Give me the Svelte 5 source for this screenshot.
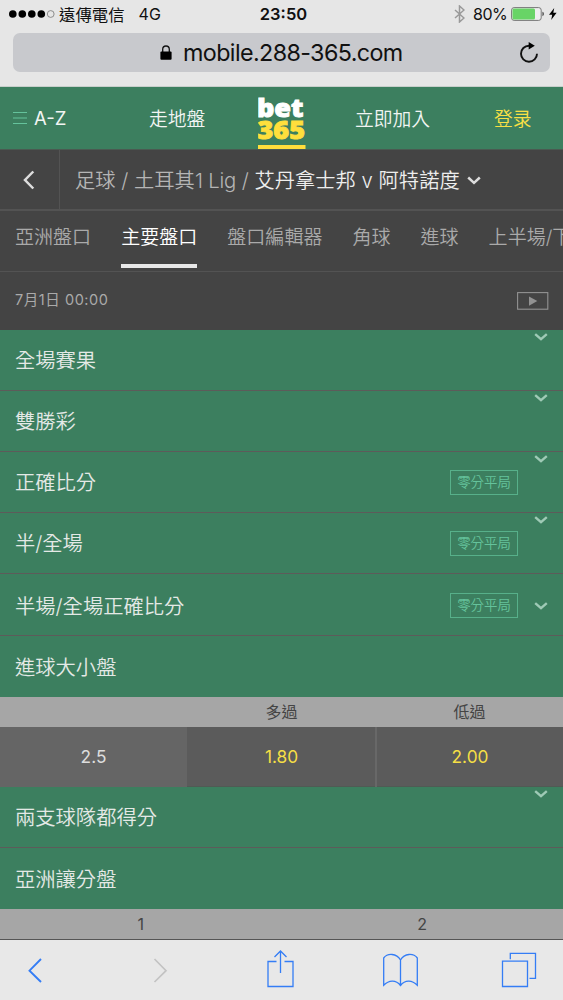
<script lang="ts">
  type Market = {
    name: string;
    height: number;
    badge?: boolean;
    open?: boolean;
    chevron?: "top" | "middle";
  };

  const tabs = ["亞洲盤口", "主要盤口", "盤口編輯器", "角球", "進球", "上半場/下半場"];
  const activeTab = "主要盤口";

  const markets: Market[] = [
    { name: "全場賽果", height: 61, chevron: "top" },
    { name: "雙勝彩", height: 61, chevron: "top" },
    { name: "正確比分", height: 61, badge: true, chevron: "top" },
    { name: "半/全場", height: 61, badge: true, chevron: "top" },
    { name: "半場/全場正確比分", height: 62, badge: true, chevron: "middle" },
    { name: "進球大小盤", height: 61, open: true },
  ];
  const lowerMarkets: Market[] = [
    { name: "兩支球隊都得分", height: 61, chevron: "top" },
    { name: "亞洲讓分盤", height: 61, open: true },
  ];
</script>

{#snippet marketRow(m: Market)}
  <div class="market" class:open={m.open} class:mid={m.chevron === "middle"} style="height: {m.height}px">
    <span class="title">{m.name}</span>
    {#if m.badge}<span class="badge">零分平局</span>{/if}
    {#if m.chevron}
      <svg class="chev" class:top={m.chevron === "top"} width="14" height="8" viewBox="0 0 14 8">
        <path d="M1.2 1.2 7 6.2l5.8-5" />
      </svg>
    {/if}
  </div>
{/snippet}

<div class="screen">
  <div class="status">
    <div class="left">
      <svg width="46" height="10" viewBox="0 0 46 10">
        {#each [0, 1, 2, 3] as i}
          <circle cx={3.8 + i * 9.5} cy="5" r="3.8" />
        {/each}
        <circle cx="41.7" cy="5" r="3.4" fill="none" stroke="#777" stroke-width=".8" />
      </svg>
      <span class="carrier">遠傳電信</span>
      <span class="net">4G</span>
    </div>
    <strong>23:50</strong>
    <div class="right">
      <svg width="11" height="18" viewBox="0 0 11 18" fill="none" stroke="#999" stroke-width="1.5">
        <path d="M1 5l9 8-4.5 4V1L10 5l-9 8" />
      </svg>
      <span class="pct">80%</span>
      <svg class="battery" width="34" height="14" viewBox="0 0 34 14">
        <rect x=".6" y=".6" width="29.6" height="12.8" rx="2.5" fill="#eee" stroke="#777" />
        <rect x="1.5" y="1.5" width="22.5" height="11" rx="1.5" fill="#68d466" />
        <path d="M31.5 4.8c1.7.5 1.7 3.9 0 4.4z" fill="#333" />
      </svg>
      <svg width="8" height="12" viewBox="0 0 8 12"><path d="M5.2 0 0 6.8h3.2L2.2 12 7.6 4.8H4.3z" /></svg>
    </div>
  </div>

  <div class="address">
    <div class="field">
      <svg class="lock" width="12" height="15" viewBox="0 0 12 15">
        <path d="M2.7 7V4.3a3.3 3.3 0 0 1 6.6 0V7" fill="none" stroke="#111" stroke-width="1.3" />
        <rect x=".4" y="6.6" width="11.2" height="8.2" rx="1" fill="#000" />
      </svg>
      <span class="url">mobile.288-365.com</span>
      <svg class="reload" width="20" height="22" viewBox="0 0 20 22">
        <path d="M11.5 3.7H10a8 8 0 1 0 8 8" fill="none" stroke="#111" stroke-width="1.9" />
        <path d="M9.7 0 15.8 3.7 9.7 7.4z" />
      </svg>
    </div>
  </div>

  <header>
    <div class="az">
      <svg width="14" height="14" viewBox="0 0 14 14" stroke="#65c39c" stroke-width="1.1">
        <path d="M0 1.5h14M0 7h14M0 12.5h14" />
      </svg>
      <span>A-Z</span>
    </div>
    <span class="live">走地盤</span>
    <svg class="logo" width="48" height="62" viewBox="0 0 48 62">
      <text x="-1" y="29.7" fill="#fff" stroke="#fff" textLength="46.5" lengthAdjust="spacingAndGlyphs">bet</text>
      <text x="-.5" y="51.5" fill="#ffdf3c" stroke="#ffdf3c" textLength="47.5" lengthAdjust="spacingAndGlyphs">365</text>
      <rect y="58" width="47.5" height="4" fill="#ffdf3c" />
    </svg>
    <span class="join">立即加入</span>
    <span class="login">登录</span>
  </header>

  <nav class="crumbs">
    <div class="back">
      <svg width="12" height="20" viewBox="0 0 12 20"><path d="M10.3 1.5 2 10l8.3 8.5" /></svg>
    </div>
    <div class="path">足球 / 土耳其<span class="lat">1 Lig</span> / <b>艾丹拿士邦 v 阿特諾度</b></div>
    <svg class="drop" width="14" height="9" viewBox="0 0 14 9"><path d="M1.2 1.5 7 6.9l5.8-5.4" /></svg>
  </nav>

  <div class="tabs">
    {#each tabs as t}
      <span class="tab" class:active={t === activeTab}>{t}</span>
    {/each}
  </div>

  <div class="when">
    <span>7月1日 00:00</span>
    <svg width="32" height="18" viewBox="0 0 32 18">
      <rect x=".6" y=".6" width="30.2" height="16.6" fill="none" stroke="#929292" stroke-width="1.1" />
      <path d="M12 4.5v9.2l8.3-4.6z" fill="#929292" />
    </svg>
  </div>

  {#each markets as m}
    {@render marketRow(m)}
  {/each}

  <div class="heads three"><span></span><span>多過</span><span>低過</span></div>
  <div class="odds"><span>2.5</span><span>1.80</span><span>2.00</span></div>

  {#each lowerMarkets as m}
    {@render marketRow(m)}
  {/each}

  <div class="heads two"><span>1</span><span>2</span></div>

  <footer>
    <svg width="563" height="60" viewBox="0 0 563 60" fill="none" stroke="#347df5" stroke-width="1.3">
      <path d="M41 19 29.5 30.7 41 42" stroke-width="1.9" />
      <path d="M154.5 19 166 30.7 154.5 42" stroke="#c3c3c3" stroke-width="1.7" />
      <path d="M276.5 21.5h-8.5v25h25v-25h-8.5M280.5 33V11.5M274.5 17l6-6 6 6" />
      <path d="M400.5 45.5V20c-4-7-13-7-16.8-2v27.2c5-5 12-6 16.8.3 4.8-6.3 11.8-5.3 16.8-.3V18c-3.8-5-12.8-5-16.8 2" />
      <path d="M502.5 21.2h25v25.3h-25zM510.3 19.2v-5.8h25.2v25h-6" />
    </svg>
  </footer>
</div>

<style>
  :global(body) {
    margin: 0;
  }
  .screen {
    width: 563px;
    height: 1000px;
    overflow: hidden;
    display: flex;
    flex-direction: column;
    background: #444;
    font-family: Inter, "Noto Sans CJK TC", sans-serif;
    font-weight: 350;
  }
  .screen > * {
    flex: none;
    box-sizing: border-box;
  }
  span,
  b {
    white-space: nowrap;
  }
  .status {
    display: grid;
    grid-template-columns: 1fr auto 1fr;
    align-items: center;
    height: 29px;
    padding: 0 6px 1px 9px;
    background: #e6e6e6;
    color: #111;
    font-weight: 400;
    font-size: 16px;
  }
  .status strong {
    font-weight: 600;
    font-size: 16.5px;
    padding-left: 1px;
  }
  .left,
  .right {
    display: flex;
    align-items: center;
  }
  .right {
    justify-content: flex-end;
  }
  .carrier {
    font-size: 16.4px;
    margin-left: 4px;
  }
  .net {
    margin-left: 14px;
  }
  .pct {
    margin: 0 4px 0 8px;
    letter-spacing: -0.6px;
  }
  .battery {
    margin-right: 4px;
  }
  .address {
    height: 58px;
    padding: 4px 13px 0;
    background: #e6e6e6;
    border-bottom: 1px solid #c8cfcb;
  }
  .field {
    display: flex;
    align-items: center;
    height: 39px;
    padding: 0 11px 0 147px;
    border-radius: 7px;
    background: #c8c9cd;
    color: #111;
  }
  .url {
    margin-left: 11px;
    font-size: 23.3px;
    font-weight: 400;
    letter-spacing: -0.6px;
  }
  .reload {
    margin-left: auto;
  }
  header {
    display: flex;
    align-items: center;
    height: 63px;
    padding-left: 13px;
    background: #3c7f5f;
    border-bottom: 1px solid #4a5a51;
    color: #f2f5f3;
    font-size: 18.8px;
  }
  header > span {
    padding-bottom: 2px;
  }
  .az {
    display: flex;
    align-items: center;
    gap: 7px;
    width: 136px;
    font-size: 18.5px;
    font-weight: 400;
  }
  .live {
    width: 109px;
  }
  .logo {
    width: 48px;
    margin-right: 49px;
    font-family: "Open Sans", sans-serif;
    font-size: 24.5px;
    font-weight: 800;
    stroke-width: 0.9px;
  }
  .join {
    width: 139px;
  }
  .login {
    color: #f8e045;
  }
  .crumbs {
    display: flex;
    align-items: center;
    height: 61px;
    border-bottom: 2px solid #535353;
    color: #b5b5b5;
    font-size: 20.3px;
  }
  .back {
    display: flex;
    align-items: center;
    width: 60px;
    height: 59px;
    padding-left: 23px;
    box-sizing: border-box;
    border-right: 1px solid #535353;
  }
  .back path,
  .drop path {
    fill: none;
    stroke: #ddd;
    stroke-width: 2.5;
  }
  .path {
    padding: 0 0 2px 15px;
    white-space: nowrap;
  }
  .lat {
    letter-spacing: -0.2px;
  }
  .path b {
    color: #eee;
    font-weight: 350;
  }
  .drop {
    margin: 2px 0 0 7px;
  }
  .tabs {
    display: flex;
    gap: 30px;
    height: 61px;
    padding-left: 15px;
    border-bottom: 1px solid #535353;
    color: #aaa;
    font-size: 19.05px;
  }
  .tab {
    height: 57px;
    line-height: 53px;
    box-sizing: border-box;
  }
  .tab.active {
    color: #fff;
    border-bottom: 4px solid #e8e8e8;
  }
  .when {
    display: flex;
    align-items: center;
    justify-content: space-between;
    height: 58px;
    padding: 0 14px 5px 15px;
    color: #aaa;
    font-size: 14.5px;
    font-weight: 400;
    letter-spacing: 0.55px;
  }
  .when span {
    padding-bottom: 1px;
  }
  .when svg {
    margin-top: 4px;
  }
  .market {
    position: relative;
    display: flex;
    align-items: center;
    padding: 0 15px;
    background: #3c7f5f;
    border-bottom: 1px solid #5d5b5a;
    color: #e4e9e6;
    font-size: 20.3px;
  }
  .market.open {
    border-bottom: 0;
  }
  .market.mid {
    padding-top: 2px;
  }
  .title {
    margin-right: auto;
    padding-bottom: 2px;
  }
  .badge {
    width: 68px;
    height: 25px;
    box-sizing: border-box;
    border: 1.5px solid #57b08a;
    color: #65c39c;
    font-size: 13.4px;
    line-height: 22px;
    text-align: center;
    margin-right: 30px;
  }
  .chev {
    position: absolute;
    right: 15px;
  }
  .chev.top {
    top: 3px;
  }
  .chev path {
    fill: none;
    stroke: #9fcab6;
    stroke-width: 2.4;
  }
  .heads {
    display: grid;
    height: 30px;
    background: #a6a6a6;
    color: #444;
    font-size: 16px;
    font-weight: 400;
    line-height: 30px;
    text-align: center;
  }
  .three {
    grid-template-columns: 187px 189px 187px;
  }
  .two {
    grid-template-columns: 1fr 1fr;
    height: 31px;
    border-bottom: 1px solid #555;
  }
  .odds {
    display: grid;
    grid-template-columns: 187px 189px 187px;
    height: 60px;
    border-bottom: 1px solid #505a54;
    background: #5b5b5b;
    color: #f5df45;
    font-size: 17.3px;
    font-weight: 400;
    line-height: 60px;
    text-align: center;
  }
  .odds span:first-child {
    background: #656565;
    color: #ddd;
  }
  .odds span:last-child {
    border-left: 2px solid #686868;
    margin-left: -1px;
  }
  footer {
    height: 60px;
    background: #e8e8e8;
  }
</style>
